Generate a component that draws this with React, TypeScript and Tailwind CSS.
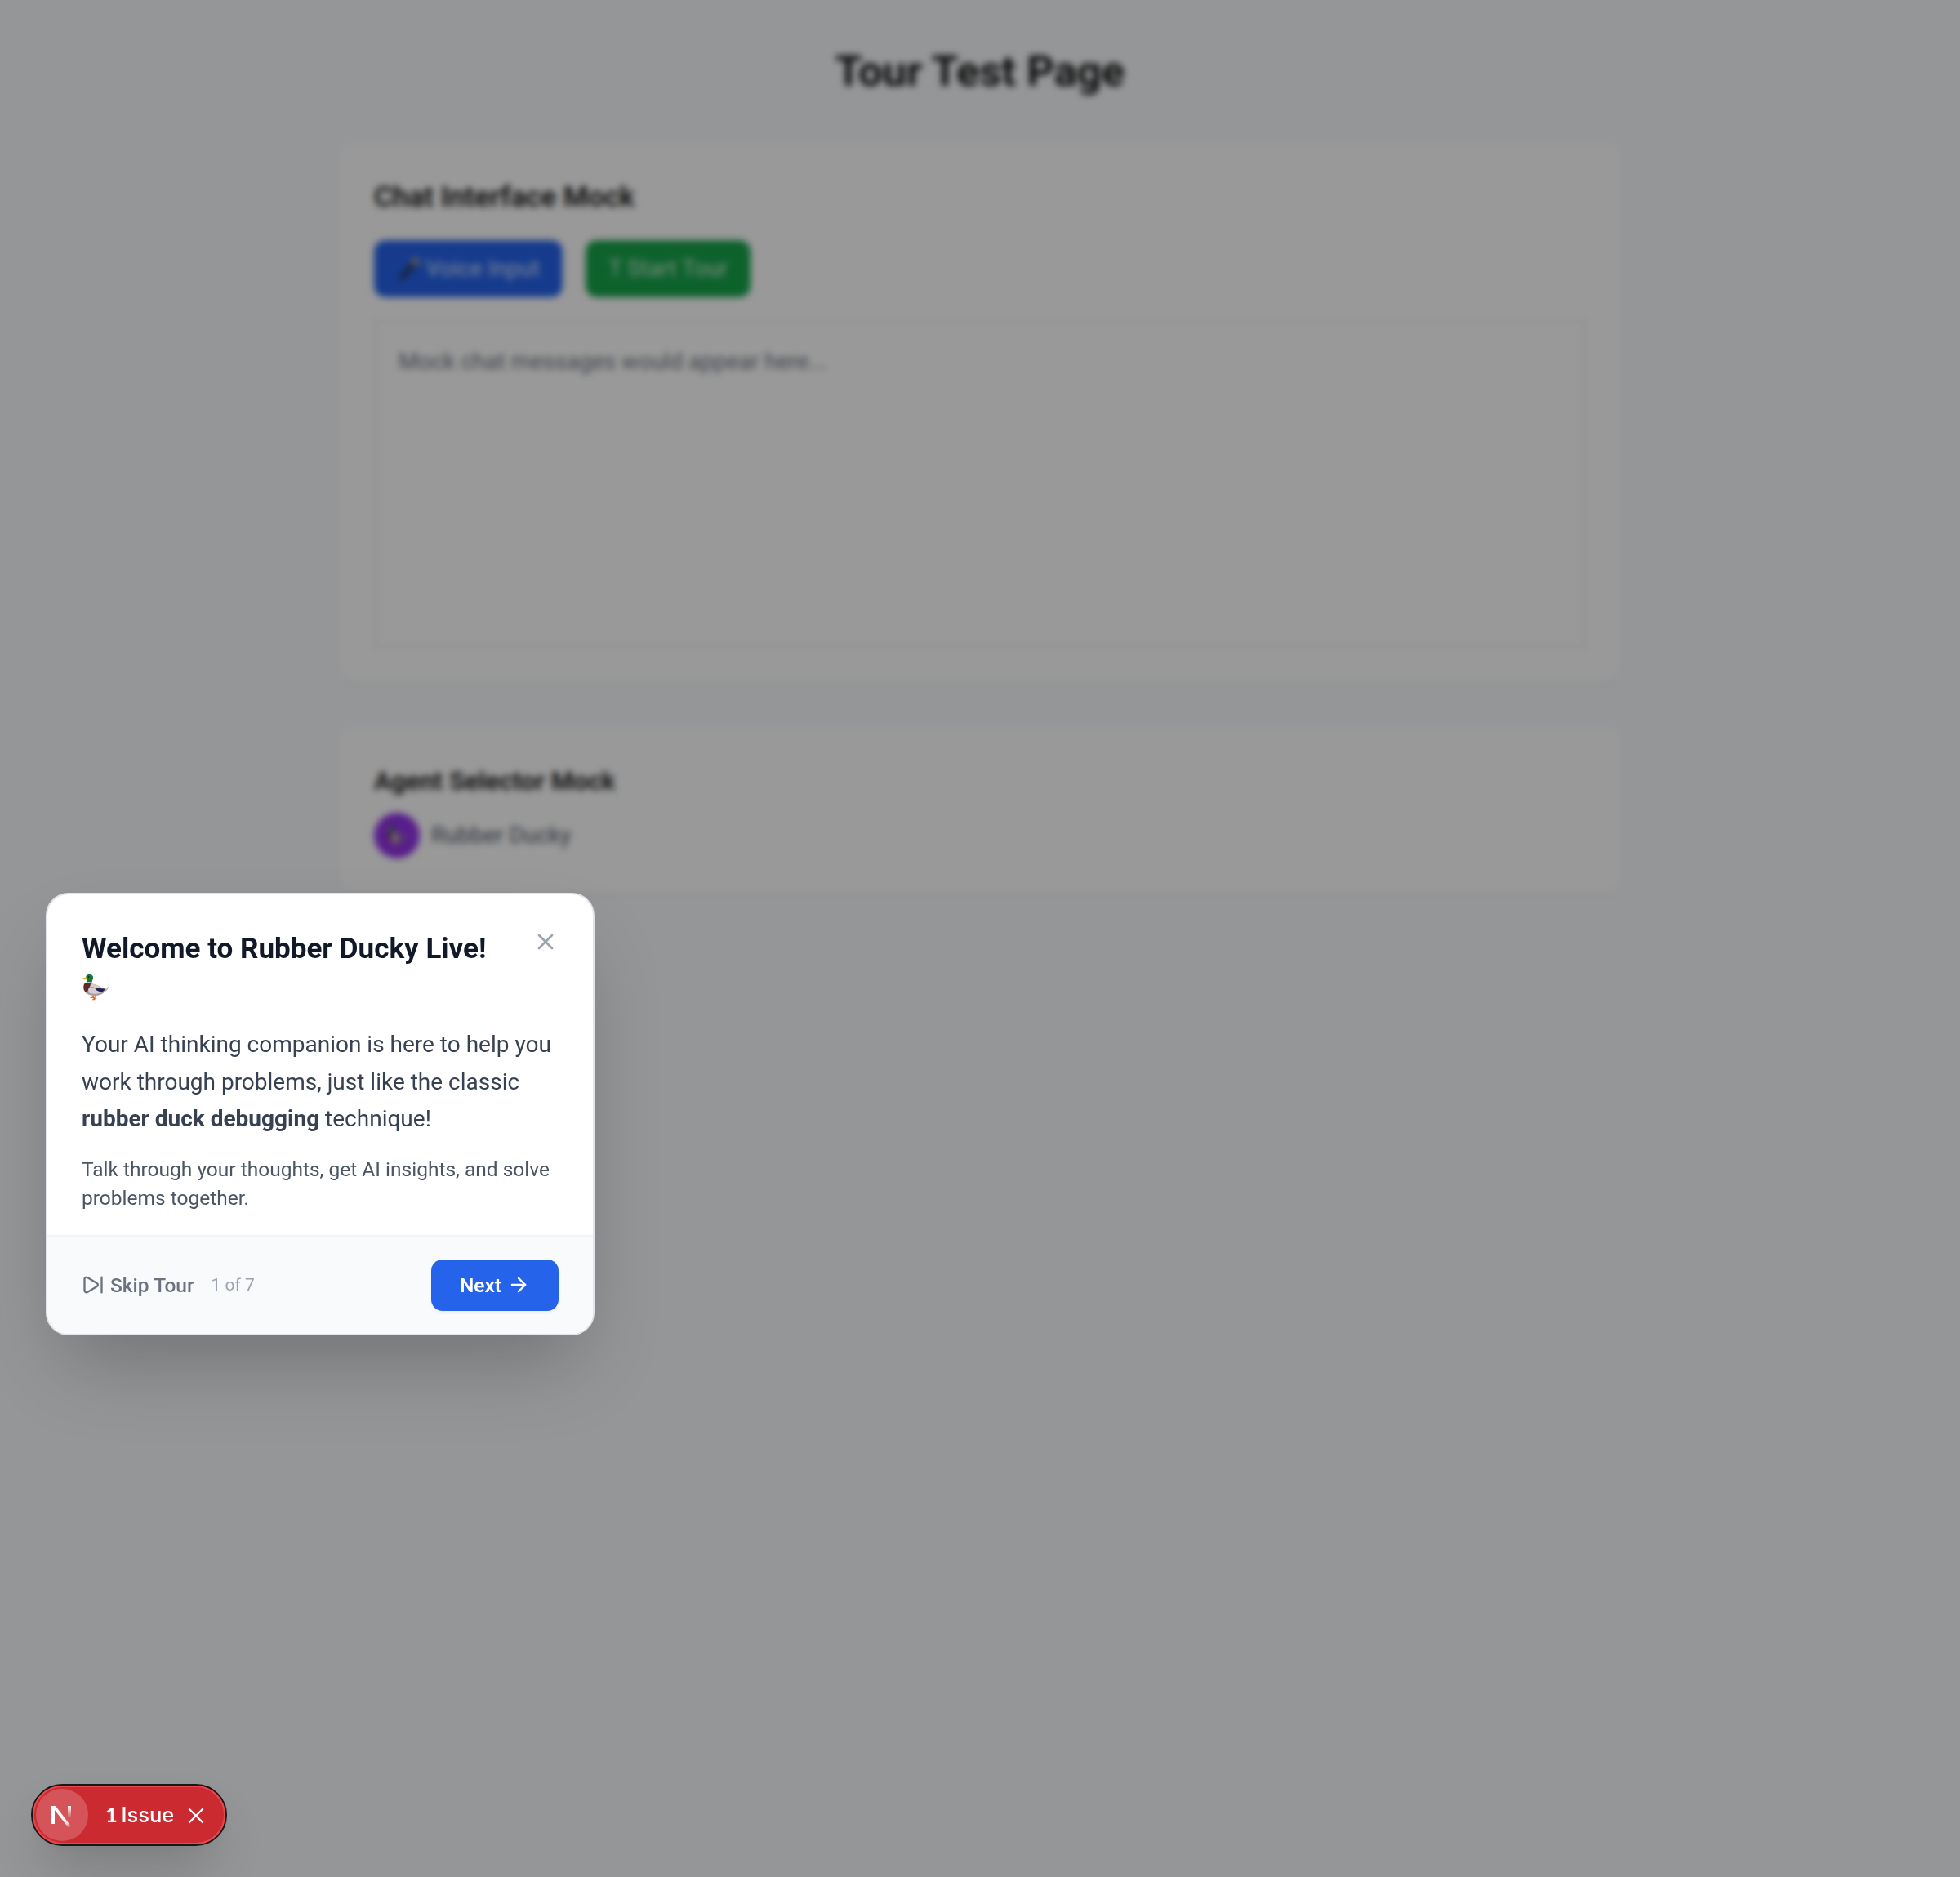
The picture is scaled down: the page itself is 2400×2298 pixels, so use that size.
import React from "react";
import { ArrowRight, SkipForward, X } from "lucide-react";

function Duck({ className }: { className: string }) {
  return (
    <svg viewBox="0 0 34 34" className={className} aria-hidden="true">
      <path d="M14.300 27v4M17 26.500v3.500" stroke="#e2571e" strokeWidth="1.300" fill="none" />
      <path d="M9.800 30.200l4.500-.9 1.800.8-1 1.200-2.300-.3zM12.500 33.200l2.700-2.400 2.200-.8-1.200 3.200z" fill="#f26322" />
      <path d="M4.500 12.500C7 11.500 10 11.800 12 13C17 14.200 22 16 25.500 19C28.500 19 31.500 18.200 33.200 17C32.800 20 30.500 22 28 23.500C25 27 19 28.500 13 27.800C6.500 27 2.200 23.500 2.400 18C2.500 15.500 3 13.700 4.500 12.500z" fill="#a99ca2" />
      <path d="M9 13.500C15 13 21.500 15.500 26 19.200C28.500 19.300 31 18.700 32.500 17.800C31.500 20.500 29.500 21.500 27.500 22.500C23.500 25.500 16 26.500 10 25C7.500 21.500 7 17 9 13.500z" fill="#d8ccd1" />
      <path d="M3.500 13.200C5.500 11.800 9.500 11.900 11 13C11 16 9.500 18 8.500 19.200C8 21 7.500 22.500 6.200 24.500C3.500 22.800 2.300 20.500 2.400 17.500C2.500 15.600 2.700 14.200 3.500 13.200z" fill="#5b2a2c" />
      <path d="M16.500 19.500C20 18.600 25 19 29.500 19.800L25.500 23.400C21.500 23.300 18.500 22 16.500 19.500z" fill="#2b2529" />
      <path d="M17.800 20.600l8.200.6-1.500 1.900c-3 .2-5-.9-6.700-2.500z" fill="#131c8c" />
      <path d="M10.500 18c3-.7 5.500 0 7.500 2.300" stroke="#7d6c70" strokeWidth=".7" fill="none" />
      <path d="M5.200 4.500C6.500.9 12.700.6 13.900 4.800C14.500 7.700 12.800 9.500 12.200 12.200C9.500 11.500 7 11.500 5.400 12.200C6.400 10.500 6.500 9.300 5.400 7.600z" fill="#14783a" />
      <path d="M5.100 11.700c2.200-.7 4.900-.7 7.100 0l-.2 1c-2.400-.6-4.900-.6-7.200.1z" fill="#efe9ea" />
      <path d="M5.700 5.300L.3 7C2 8.500 4.500 8.600 6.500 7.600z" fill="#e8a925" />
      <circle cx="8.600" cy="5" r=".8" fill="#08190d" />
    </svg>
  );
}

function Microphone() {
  return (
    <svg viewBox="0 0 34 34" className="h-[34px] w-[34px]" aria-hidden="true">
      <path d="M4 29L20 10l5 4L7 31z" fill="#2c2c31" />
      <path d="M19 10a6 6 0 0 1 10-5a6 6 0 0 1-4 9z" fill="#9a9a9c" />
    </svg>
  );
}

function MockPage() {
  return (
    <main className="min-h-[2298px] bg-[#f8fafd] p-[56px] text-[28px] leading-[42px] text-[#111111]">
      <div className="mx-auto w-[1568px]">
        <h1 className="mb-[56px] text-center text-[52.5px] leading-[63px] font-bold">Tour Test Page</h1>
        <section className="mb-[56px] rounded-[14px] bg-white p-[42px] shadow-[0_2px_4px_rgba(0,0,0,0.05)]">
          <h2 className="mb-[28px] text-[35px] leading-[49px] font-semibold">Chat Interface Mock</h2>
          <div className="flex gap-[28px]">
            <button className="flex h-[70px] w-[231px] items-center rounded-[14px] bg-[#2563eb] pl-[26px] text-white/80">
              <Microphone />
              <span className="ml-[3px] whitespace-nowrap">Voice Input</span>
            </button>
            <button className="h-[70px] rounded-[14px] bg-[#16a34a] px-[28px] text-white/80">T Start Tour</button>
          </div>
          <div className="mt-[28px] h-[400px] border-2 border-[#e5e7eb] p-[28px]">
            <p className="text-[#6b7280]">Mock chat messages would appear here...</p>
          </div>
        </section>
        <section className="rounded-[14px] bg-white p-[42px] shadow-[0_2px_4px_rgba(0,0,0,0.05)]">
          <h3 className="mb-[14px] text-[31.5px] leading-[49px] font-semibold">Agent Selector Mock</h3>
          <div className="flex items-center gap-[14px]">
            <div className="flex h-[56px] w-[56px] items-center justify-center rounded-full bg-[#9333ea]">
              <Duck className="h-[26px] w-[26px]" />
            </div>
            <span className="text-[#4b5563]">Rubber Ducky</span>
          </div>
        </section>
      </div>
    </main>
  );
}

function TourDialog() {
  return (
    <div className="fixed top-[1093px] left-[56px] flex h-[542px] w-[672px] flex-col overflow-hidden rounded-[28px] border-2 border-[#e1e5eb] bg-white shadow-[0_50px_100px_-24px_rgba(0,0,0,0.25)]">
      <div className="flex-1 px-[42px] pt-[42px]">
        <div className="flex items-start justify-between">
          <h2 className="text-[35px] leading-[48px] font-bold text-[#111827]">
            <span className="block pt-px whitespace-nowrap">Welcome to Rubber Ducky Live!</span>
            <Duck className="mt-[5px] mb-[9px] h-[34px] w-[34px]" />
          </h2>
          <button className="text-[#9ca3af]">
            <X className="h-[32px] w-[32px]" />
          </button>
        </div>
        <p className="mt-[22px] text-[28px] leading-[45.5px] whitespace-nowrap text-[#374151]">
          Your AI thinking companion is here to help you
          <br />
          work through problems, just like the classic
          <br />
          <strong className="font-bold">rubber duck debugging</strong> technique!
        </p>
        <p className="mt-[21px] text-[24.5px] leading-[35px] whitespace-nowrap text-[#4b5563]">
          Talk through your thoughts, get AI insights, and solve
          <br />
          problems together.
        </p>
      </div>
      <div className="flex h-[121px] items-center justify-between border-t-2 border-[#f3f4f6] bg-[#f9fafb] px-[42px]">
        <div className="flex items-center pb-px">
          <button className="flex items-center gap-[7px] text-[24.5px] leading-[35px] font-medium text-[#6b7280]">
            <SkipForward className="h-[28px] w-[28px]" />
            Skip Tour
          </button>
          <span className="ml-[21px] text-[21px] leading-[28px] text-[#9ca3af]">1 of 7</span>
        </div>
        <button className="flex h-[63px] w-[156px] items-center justify-center gap-[7px] rounded-[14px] bg-[#2563eb] pb-px text-[24.5px] leading-[35px] font-semibold text-white shadow-[0_2px_4px_rgba(0,0,0,0.05)]">
          Next
          <ArrowRight className="h-[28px] w-[28px]" />
        </button>
      </div>
    </div>
  );
}

function IssueBadge() {
  return (
    <div className="fixed top-[2184px] left-[38px] flex h-[76px] w-[240px] items-center rounded-full border-2 border-[#171717] bg-[#ca2a30] shadow-[0_32px_64px_-16px_rgba(0,0,0,0.24),0_8px_16px_-4px_rgba(0,0,0,0.04)]">
      <div className="flex h-full w-full items-center rounded-full border-2 border-[#e5484d] pl-[2px] text-white">
        <span className="flex h-[64px] w-[64px] items-center justify-center rounded-full bg-white/20">
          <svg viewBox="0 0 40 40" className="h-[40px] w-[40px]" fill="none" aria-hidden="true">
            <defs>
              <linearGradient id="diag" x1="22" y1="22" x2="31" y2="34" gradientUnits="userSpaceOnUse">
                <stop stopColor="#fff" />
                <stop offset=".6" stopColor="#fff" stopOpacity=".8" />
                <stop offset="1" stopColor="#fff" stopOpacity="0" />
              </linearGradient>
              <linearGradient id="stem" x1="29" y1="9" x2="29" y2="24" gradientUnits="userSpaceOnUse">
                <stop stopColor="#fff" />
                <stop offset="1" stopColor="#fff" stopOpacity="0" />
              </linearGradient>
            </defs>
            <path d="M7 9h4v22H7z" fill="#fff" />
            <path d="M7 9h5L31.500 34.500l-3 2z" fill="url(#diag)" />
            <path d="M27 9h4v17h-4z" fill="url(#stem)" />
          </svg>
        </span>
        <span className="ml-[21px] font-[Inter] text-[25.5px] leading-none font-medium whitespace-nowrap">
          <span className="-mr-[2px] font-[Lato] font-bold">1</span> Issue
        </span>
        <svg viewBox="0 0 20 20" className="absolute top-[27px] left-[190px] h-[20px] w-[20px]" aria-hidden="true">
          <path d="M1.500 1.500l17 17M18.500 1.500l-17 17" stroke="currentColor" strokeWidth="2.300" />
        </svg>
      </div>
    </div>
  );
}

export default function App() {
  return (
    <div className="relative h-[2298px] overflow-hidden font-[Roboto,sans-serif]">
      <MockPage />
      <div className="fixed inset-0 bg-black/40 backdrop-blur-[4px]" />
      <TourDialog />
      <IssueBadge />
    </div>
  );
}
